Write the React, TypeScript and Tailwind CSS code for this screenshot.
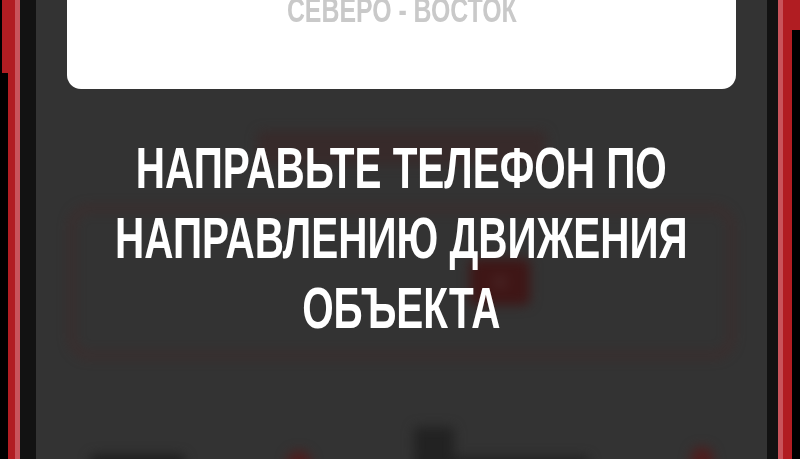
export default function App() {
  return (
    <div className="flex h-[459px] w-[800px] overflow-hidden bg-black font-['Liberation_Sans',Arial,sans-serif]">
      {/* left frame */}
      <div className="w-[2px] bg-black" />
      <div className="flex w-[6px] flex-col">
        <div className="h-[73px] bg-[#b11d22]" />
        <div className="flex-1 bg-black" />
      </div>
      <div className="w-[7px] bg-[#b11d22]" />
      <div className="w-[5px] bg-[#c8545b]" />
      <div className="w-[16px] bg-[#121212]" />

      {/* screen */}
      <div className="relative flex flex-1 flex-col overflow-hidden bg-[#333333]">
        <div className="mx-[31px] -mt-[40px] flex h-[129px] shrink-0 items-start justify-center rounded-[14px] bg-white pt-[32px]">
          <span className="scale-x-[0.71] whitespace-nowrap text-[35px] font-bold leading-[35px] text-[#c9c9c9]">
            СЕВЕРО - ВОСТОК
          </span>
        </div>

        {/* blurred content behind the hint */}
        <div className="flex flex-1 flex-col px-[34px] blur-[6px]">
          <div className="mx-auto mt-[42px] h-[34px] w-[290px] rounded-[6px] bg-[#3a2424] opacity-60" />
          <div className="mt-[42px] flex h-[150px] items-center justify-end rounded-[20px] border-[3px] border-[#472525] pr-[200px]">
            <div className="flex h-[46px] w-[60px] items-center justify-center rounded-[6px] bg-[#3f1616]">
              <div className="h-[12px] w-[12px] rounded-full bg-[#4a2626]" />
            </div>
          </div>
          <div className="mt-[70px] flex items-end justify-between px-[20px]">
            <div className="h-[22px] w-[95px] rounded-[6px] bg-[#1e1e1e]" />
            <div className="h-[26px] w-[24px] rounded-full bg-[#4f1c1c]" />
            <div className="flex flex-col">
              <div className="h-[30px] w-[40px] rounded-[4px] bg-[#222222]" />
              <div className="h-[20px] w-[175px] rounded-[4px] bg-[#222222]" />
            </div>
            <div className="h-[30px] w-[22px] rounded-full bg-[#4f1c1c]" />
          </div>
        </div>

        {/* overlay hint */}
        <div className="absolute left-0 right-0 top-[133px] flex justify-center">
          <div className="w-max scale-x-[0.71] whitespace-nowrap text-center text-[57px] font-bold uppercase leading-[70px] text-white">
            Направьте телефон по
            <br />
            направлению движения
            <br />
            объекта
          </div>
        </div>
      </div>

      {/* right frame */}
      <div className="w-[11px] bg-[#121212]" />
      <div className="w-[5px] bg-[#c8545b]" />
      <div className="w-[9px] bg-[#b11d22]" />
      <div className="flex w-[8px] flex-col">
        <div className="h-[30px] bg-[#b11d22]" />
        <div className="flex-1 bg-black" />
      </div>
    </div>
  );
}
